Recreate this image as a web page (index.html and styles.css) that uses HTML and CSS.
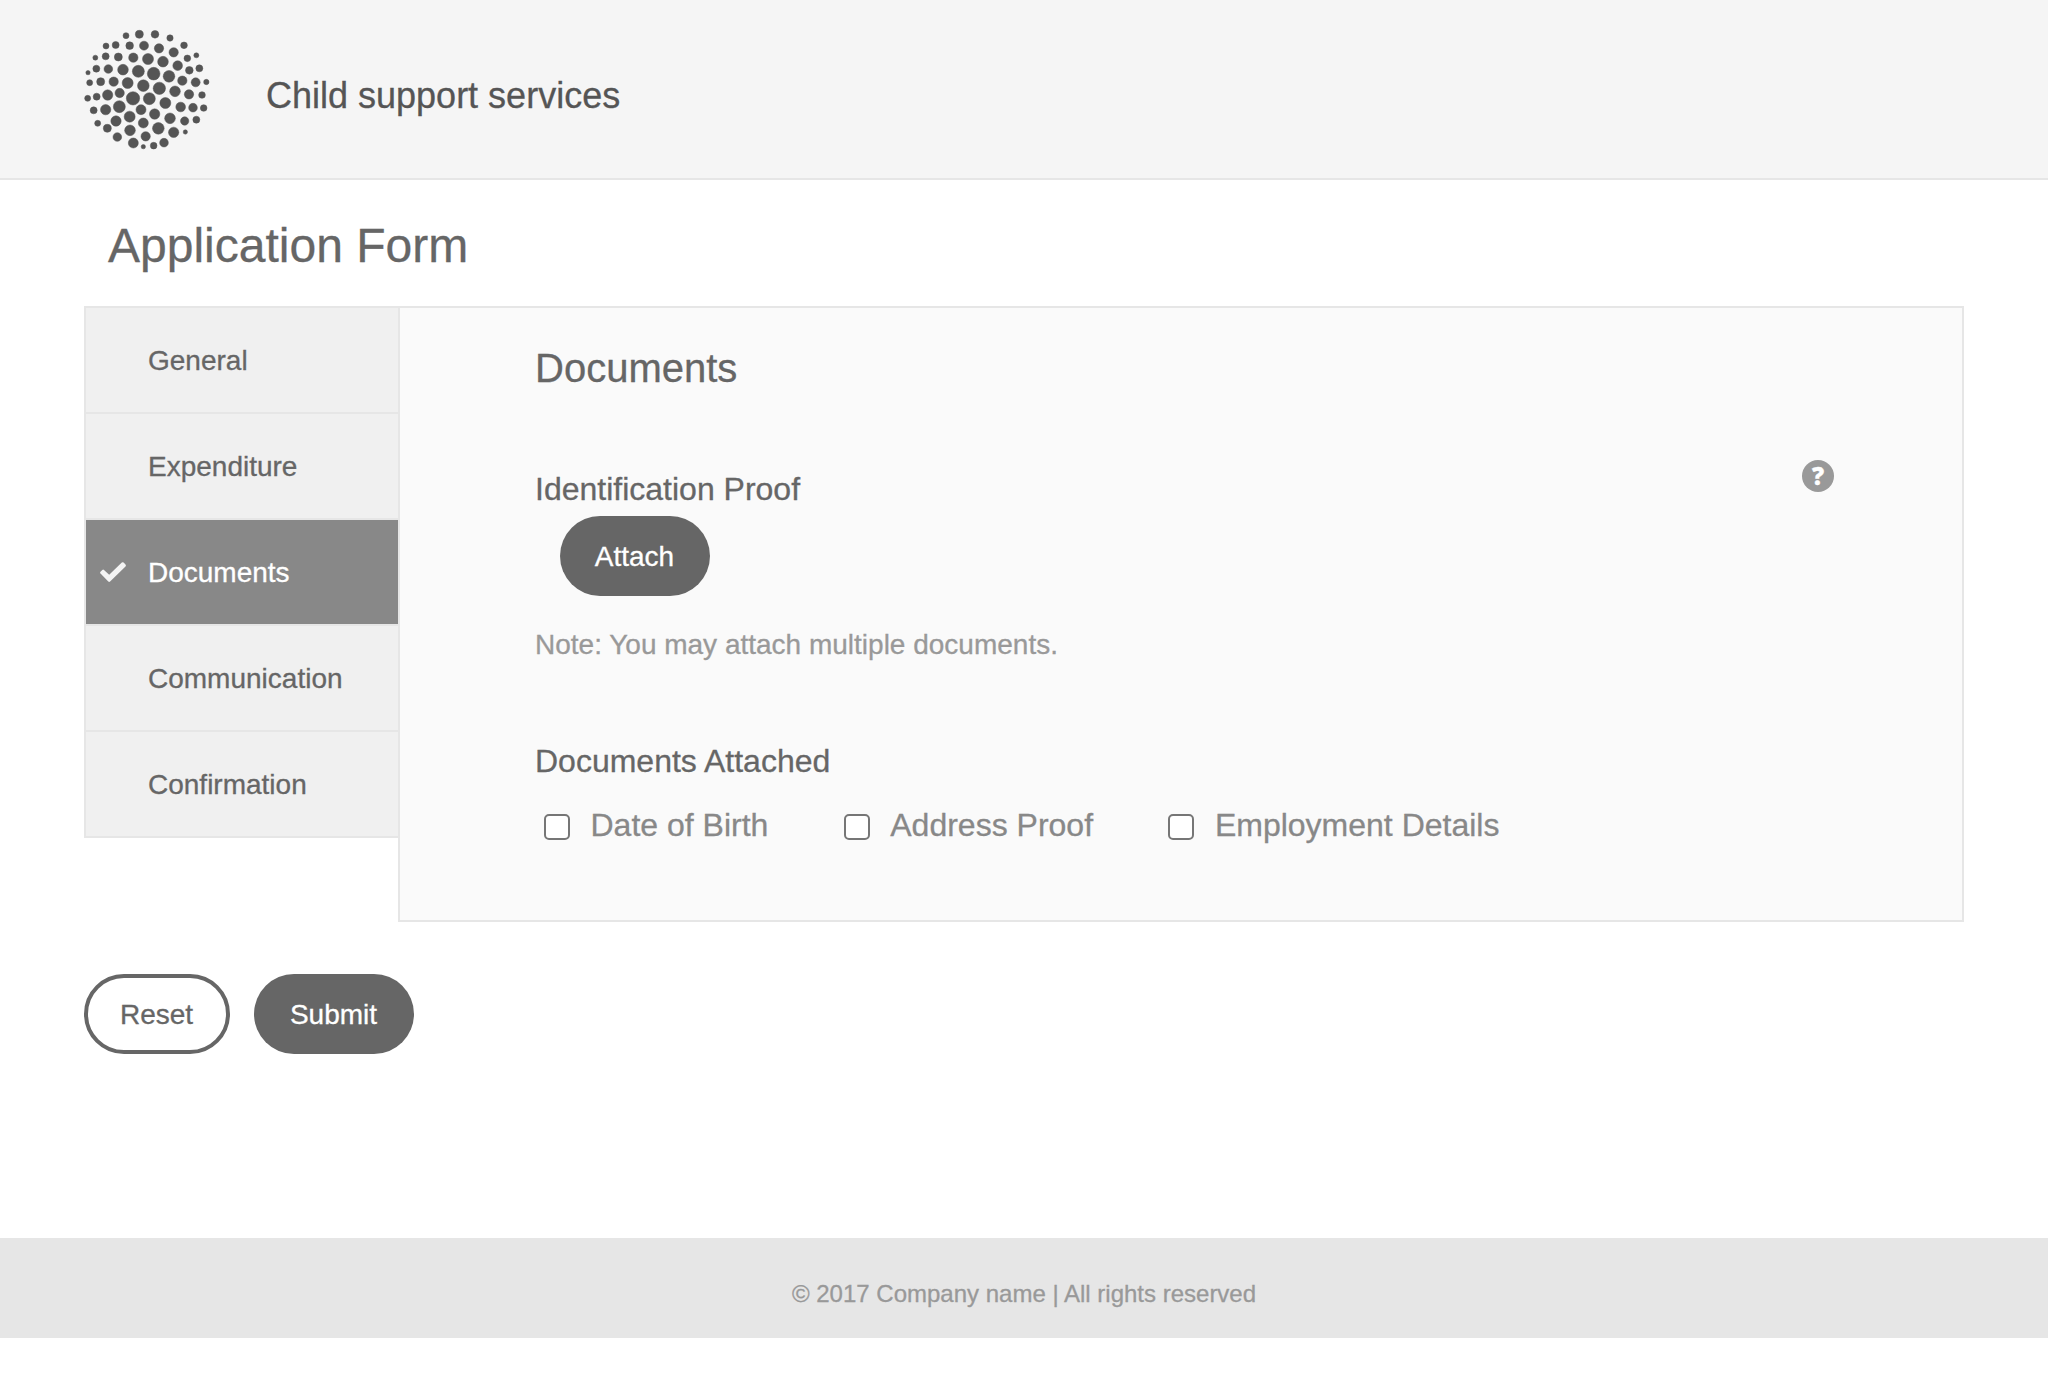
FILE: index.html
```html
<!DOCTYPE html>
<html lang="en">
<head>
<meta charset="utf-8">
<title>Child support services</title>
<link rel="stylesheet" href="styles.css">
</head>
<body>
<header class="site-header">
  <svg class="logo" viewBox="0 0 432 420" aria-hidden="true">
    <g>
      <circle cx="150" cy="47" r="9"/><circle cx="190" cy="43" r="12"/><circle cx="237" cy="43" r="11.500"/><circle cx="282" cy="54" r="9.500"/>
      <circle cx="90" cy="78" r="9"/><circle cx="119" cy="75" r="10.500"/><circle cx="161" cy="77" r="11.500"/><circle cx="204" cy="77" r="13.500"/><circle cx="249" cy="85" r="14"/><circle cx="293" cy="97" r="14"/><circle cx="324" cy="76" r="10"/>
      <circle cx="58" cy="113" r="7.500"/><circle cx="89" cy="109" r="10.500"/><circle cx="127" cy="111" r="12"/><circle cx="172" cy="113" r="14"/><circle cx="216" cy="117" r="16.500"/><circle cx="261" cy="125" r="16"/><circle cx="305" cy="137" r="14.500"/><circle cx="334" cy="115" r="10"/><circle cx="361" cy="106" r="7.500"/>
      <circle cx="36" cy="158" r="6.500"/><circle cx="61" cy="146" r="10.500"/><circle cx="97" cy="147" r="13"/><circle cx="141" cy="149" r="16"/><circle cx="187" cy="154" r="18"/><circle cx="233" cy="161" r="19"/><circle cx="279" cy="169" r="17.500"/><circle cx="319" cy="182" r="14"/><circle cx="340" cy="151" r="11.500"/><circle cx="370" cy="145" r="10.500"/>
      <circle cx="41" cy="188" r="9"/><circle cx="74" cy="185" r="12"/><circle cx="113" cy="185" r="14"/><circle cx="155" cy="189" r="16.500"/><circle cx="202" cy="197" r="17.500"/><circle cx="250" cy="205" r="18.500"/><circle cx="297" cy="214" r="16"/><circle cx="339" cy="223" r="14"/><circle cx="359" cy="187" r="13.500"/><circle cx="391" cy="186" r="8"/>
      <circle cx="35" cy="235" r="9"/><circle cx="62" cy="230" r="10.500"/><circle cx="95" cy="225" r="15.500"/><circle cx="131" cy="219" r="14"/><circle cx="171" cy="235" r="20"/><circle cx="220" cy="236" r="18"/><circle cx="268" cy="249" r="16.500"/><circle cx="314" cy="261" r="14.500"/><circle cx="351" cy="263" r="13"/><circle cx="378" cy="225" r="10"/><circle cx="383" cy="264" r="10"/>
      <circle cx="53" cy="271" r="10.500"/><circle cx="89" cy="269" r="15.500"/><circle cx="130" cy="260" r="18"/><circle cx="195" cy="269" r="15"/><circle cx="236" cy="282" r="15.500"/><circle cx="282" cy="295" r="16"/><circle cx="326" cy="303" r="12.500"/><circle cx="361" cy="299" r="10.500"/>
      <circle cx="65" cy="310" r="9"/><circle cx="94" cy="325" r="12"/><circle cx="120" cy="303" r="15.500"/><circle cx="161" cy="290" r="16.500"/><circle cx="202" cy="309" r="15"/><circle cx="247" cy="325" r="17.500"/><circle cx="293" cy="337" r="15.500"/><circle cx="328" cy="336" r="6.500"/>
      <circle cx="124" cy="351" r="13"/><circle cx="162" cy="331" r="16"/><circle cx="172" cy="369" r="15"/><circle cx="209" cy="349" r="14"/><circle cx="202" cy="380" r="6.500"/><circle cx="233" cy="377" r="10"/><circle cx="264" cy="368" r="13"/>
    </g>
  </svg>
  <span class="site-name">Child support services</span>
</header>
<main class="page">
  <h1 class="page-title">Application Form</h1>
  <div class="form-layout">
    <nav class="steps">
      <a class="step">General</a>
      <a class="step">Expenditure</a>
      <a class="step step-active"><svg class="check" viewBox="0 0 26 20" aria-hidden="true"><path d="M4 8 9.200 12.800 21.800.600Q22.700-.300 23.600.600L25.500 2.500Q26.300 3.500 25.500 4.400L10.100 19.500Q9.200 20.300 8.300 19.500L.500 11.600Q-.300 10.700.500 9.800L2.300 8Q3.200 7.200 4 8Z"/></svg>Documents</a>
      <a class="step">Communication</a>
      <a class="step">Confirmation</a>
    </nav>
    <section class="panel">
      <h2 class="panel-title">Documents</h2>
      <div class="field-head">
        <h3 class="field-title">Identification Proof</h3>
        <span class="help">?</span>
      </div>
      <button class="btn btn-attach">Attach</button>
      <p class="note">Note: You may attach multiple documents.</p>
      <h3 class="field-title">Documents Attached</h3>
      <div class="checks">
        <label class="option"><input class="box" type="checkbox">Date of Birth</label>
        <label class="option"><input class="box" type="checkbox">Address Proof</label>
        <label class="option"><input class="box" type="checkbox">Employment Details</label>
      </div>
    </section>
  </div>
  <div class="actions">
    <button class="btn btn-reset">Reset</button>
    <button class="btn btn-submit">Submit</button>
  </div>
</main>
<footer class="site-footer">© 2017 Company name | All rights reserved</footer>
</body>
</html>
```
FILE: styles.css
```css
* { box-sizing: border-box; }
body {
  margin: 0;
  background: #fff;
  color: #666;
  font-family: "Liberation Sans", Arial, sans-serif;
  -webkit-text-stroke: 0.3px currentColor;
}
h1, h2, h3, p { margin: 0; font-weight: 400; }

.site-header {
  display: flex;
  height: 180px;
  padding: 20px 0 0 76px;
  background: #f5f5f5;
  border-bottom: 2px solid #e6e6e6;
}
.logo { width: 144px; height: 140px; fill: #555; stroke: #555; stroke-width: 1.5px; }
.site-name {
  margin: 55px 0 0 46px;
  font-size: 36px;
  line-height: 42px;
  color: #555;
}

.page { height: 1058px; padding: 0 84px; }
.page-title {
  height: 126px;
  padding: 38px 0 0 24px;
  font-size: 48px;
  line-height: 56px;
}

.form-layout { display: flex; align-items: flex-start; }
.steps {
  width: 314px;
  border: 2px solid #e6e6e6;
  border-width: 2px 0 0 2px;
}
.step {
  display: flex;
  align-items: center;
  height: 106px;
  padding: 2px 0 0 62px;
  background: #f0f0f0;
  background-clip: padding-box;
  border-bottom: 2px solid #e6e6e6;
  font-size: 28px;
}
.step-active {
  padding-left: 14px;
  background-color: #888;
  color: #fff;
}
.check { width: 26px; height: 20px; margin: -2px 22px 0 0; fill: #f4f4f4; }

.panel {
  flex: 1;
  height: 616px;
  padding: 36px 128px 0 135px;
  background: #fafafa;
  border: 2px solid #e6e6e6;
}
.panel-title { height: 118px; font-size: 40px; line-height: 48px; }
.field-head { display: flex; justify-content: space-between; height: 54px; }
.field-head .field-title { padding-top: 9px; }
.field-title { font-size: 32px; line-height: 36px; }
.help {
  width: 32px;
  height: 32px;
  margin-top: -2px;
  border-radius: 50%;
  background: #999;
  color: #fff;
  font: 800 24px/32px "Open Sans", sans-serif;
  text-align: center;
}

.btn {
  display: block;
  height: 80px;
  padding: 2px 1px 0 0;
  border: 0;
  border-radius: 40px;
  background: #666;
  color: #fff;
  font: 28px/32px "Liberation Sans", Arial, sans-serif;
}
.btn-attach { width: 150px; margin-left: 25px; }
.note { padding: 33px 0 82px; font-size: 28px; line-height: 32px; color: #999; }

.checks { display: flex; padding-top: 27px; }
.option {
  display: flex;
  font-size: 32px;
  line-height: 38px;
  color: #888;
}
.option + .option { margin-left: 66.4px; }
.box {
  appearance: none;
  width: 26px;
  height: 26px;
  margin: 8px 20.5px 0 9px;
  border: 2px solid #767676;
  border-radius: 5px;
  background: #fff;
}

.actions { display: flex; gap: 24px; padding-top: 52px; }
.btn-reset { width: 146px; border: 4px solid #666; background: #fff; color: #666; }
.btn-submit { width: 160px; }

.site-footer {
  height: 100px;
  padding-top: 42px;
  background: #e6e6e6;
  color: #999;
  font-size: 24px;
  line-height: 28px;
  text-align: center;
}
```
